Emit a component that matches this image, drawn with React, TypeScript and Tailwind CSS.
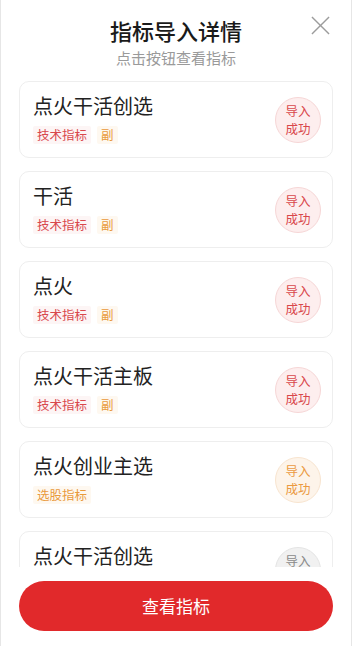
import React from "react";

type Tag = { text: string; kind: "red" | "orange" };
type Item = { name: string; tags: Tag[]; status: "red" | "orange" | "gray" };

const items: Item[] = [
  { name: "点火干活创选", tags: [{ text: "技术指标", kind: "red" }, { text: "副", kind: "orange" }], status: "red" },
  { name: "干活", tags: [{ text: "技术指标", kind: "red" }, { text: "副", kind: "orange" }], status: "red" },
  { name: "点火", tags: [{ text: "技术指标", kind: "red" }, { text: "副", kind: "orange" }], status: "red" },
  { name: "点火干活主板", tags: [{ text: "技术指标", kind: "red" }, { text: "副", kind: "orange" }], status: "red" },
  { name: "点火创业主选", tags: [{ text: "选股指标", kind: "orange" }], status: "orange" },
  { name: "点火干活创选", tags: [{ text: "技术指标", kind: "red" }, { text: "副", kind: "orange" }], status: "gray" },
];

function TagView({ tag }: { tag: Tag }) {
  return tag.kind === "red" ? (
    <span className="px-[4px] h-[18px] flex items-center text-[12.5px] text-[#d9484c] bg-[#fdf5f5] rounded-[2px]">{tag.text}</span>
  ) : (
    <span className="px-[4px] h-[18px] flex items-center text-[12.5px] text-[#e99a3c] bg-[#fef8f0] rounded-[2px]">{tag.text}</span>
  );
}

function Status({ s }: { s: Item["status"] }) {
  const cls =
    s === "red"
      ? "bg-[#fdeeee] border-[#f6d6d6] text-[#d9484c]"
      : s === "orange"
      ? "bg-[#fdf4ea] border-[#f8e4cf] text-[#eb9a42]"
      : "bg-[#f1f1f1] border-[#e4e4e4] text-[#8a8a8a]";
  return (
    <div className={`w-[46px] h-[46px] rounded-full border flex flex-col items-center justify-center text-[12.5px] leading-[18px] ${cls}`}>
      <span className="block h-[18px]">导入</span>
      <span className="block h-[18px]">成功</span>
    </div>
  );
}

export default function App() {
  return (
    <div
      className="w-[352px] h-[646px] bg-white flex flex-col border-x border-[#e6e6e6] overflow-hidden"
      style={{ fontFamily: '"Noto Sans CJK SC", "Noto Sans", sans-serif' }}
    >
      <div className="relative h-[81px] flex flex-col items-center shrink-0">
        <div className="mt-[15px] text-[22px] leading-[30px] font-medium text-[#1a1a1a]">指标导入详情</div>
        <div className="mt-[3px] text-[15px] leading-[20px] text-[#9a9a9a]">点击按钮查看指标</div>
        <svg className="absolute right-[21px] top-[16px]" width="19" height="19" viewBox="0 0 20 20">
          <path d="M1 1 L19 19 M19 1 L1 19" stroke="#9c9c9c" strokeWidth="1.5" fill="none" />
        </svg>
      </div>
      <div className="h-[486px] overflow-hidden px-[18px] flex flex-col gap-[13px] shrink-0">
        {items.map((it, i) => (
          <div
            key={i}
            className="h-[77px] shrink-0 rounded-[10px] border border-[#eeeeee] flex items-center justify-between pl-[13px] pr-[11px]"
          >
            <div className="flex flex-col self-start pt-[11px]">
              <div className="text-[20px] leading-[26px] text-[#222]">{it.name}</div>
              <div className="mt-[7px] flex gap-[6px]">
                {it.tags.map((t, j) => (
                  <TagView key={j} tag={t} />
                ))}
              </div>
            </div>
            <Status s={it.status} />
          </div>
        ))}
      </div>
      <div className="flex-1 px-[18px] pt-[14px]">
        <button className="w-full h-[50px] rounded-full bg-[#e1292b] text-white text-[17px] flex items-center justify-center">
          查看指标
        </button>
      </div>
    </div>
  );
}
